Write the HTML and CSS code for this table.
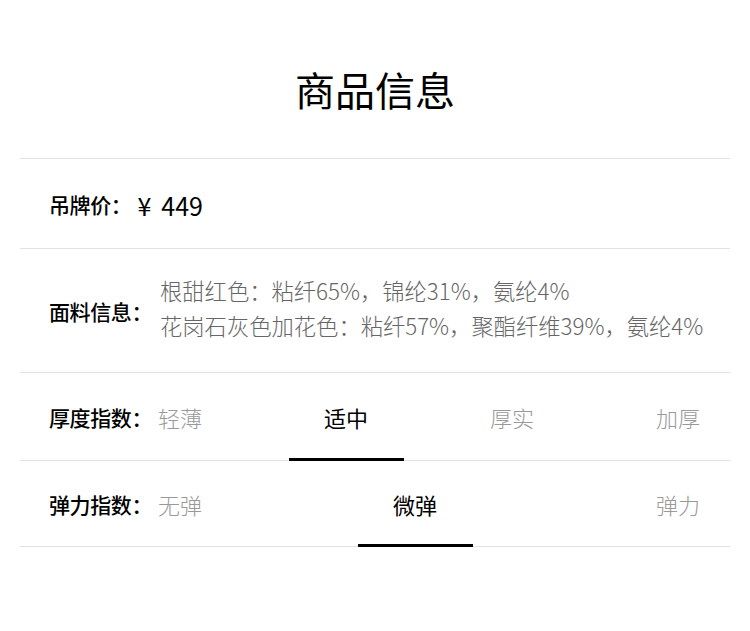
FILE: index.html
```html
<!DOCTYPE html>
<html lang="zh-CN">
<head>
  <meta charset="UTF-8" />
  <meta name="viewport" content="width=device-width, initial-scale=1.0"/>
  <title>商品信息</title>
  <link rel="stylesheet" href="styles.css">
</head>
<body>
  <div class="page">
    <h1 class="title">商品信息</h1>

    <div class="specs">
      <div class="row row-price">
        <span class="label">吊牌价：</span>
        <span class="price"><span class="currency">¥</span>449</span>
      </div>

      <div class="row row-fabric">
        <span class="label">面料信息：</span>
        <div class="fabric">
          <p>根甜红色：粘纤65%，锦纶31%，氨纶4%</p>
          <p>花岗石灰色加花色：粘纤57%，聚酯纤维39%，氨纶4%</p>
        </div>
      </div>

      <div class="row row-thick">
        <span class="label">厚度指数：</span>
        <ul class="options">
          <li>轻薄</li>
          <li class="active">适中</li>
          <li>厚实</li>
          <li>加厚</li>
        </ul>
      </div>

      <div class="row row-stretch">
        <span class="label">弹力指数：</span>
        <ul class="options">
          <li>无弹</li>
          <li class="active mid">微弹</li>
          <li>弹力</li>
        </ul>
      </div>
    </div>
  </div>
</body>
</html>
```

FILE: styles.css
```css
body {
  margin: 0;
  background: #fff;
  color: #000;
  font-family: "Noto Sans CJK SC", "Noto Sans", sans-serif;
}

.page {
  padding: 0 20px;
}

.title {
  margin: 0;
  padding: 67px 0 47px;
  font-size: 40px;
  line-height: 44px;
  font-weight: 400;
  text-align: center;
}

.specs {
  border-top: 1px solid #e2e2e2;
}

.row {
  display: flex;
  align-items: center;
  padding: 0 30px 0 29px;
  border-bottom: 1px solid #e2e2e2;
  white-space: nowrap;
}

.row-price {
  height: 89px;
}

.row-fabric {
  height: 123px;
}

.row-thick {
  height: 87px;
}

.row-stretch {
  height: 85px;
}

.label {
  flex-shrink: 0;
  margin-right: 6px;
  font-size: 21px;
  font-weight: 500;
  line-height: 30px;
  letter-spacing: -0.4px;
}

.price {
  font-size: 25px;
  line-height: 30px;
  margin-top: 2px;
}

.currency {
  margin-right: 10px;
}

.fabric {
  margin: 0 0 6px 2px;
  color: #666;
  font-size: 22.3px;
  font-weight: 300;
  line-height: 35px;
}

.fabric p {
  margin: 0;
}

.options {
  flex: 1;
  align-self: stretch;
  display: flex;
  justify-content: space-between;
  margin: 0;
  padding: 0;
  list-style: none;
}

.options li {
  position: relative;
  display: flex;
  align-items: center;
  color: #999;
  font-size: 22px;
  font-weight: 300;
}

.options .active {
  color: #000;
  font-weight: 400;
}

.options .active::after {
  content: "";
  position: absolute;
  left: 50%;
  bottom: -1px;
  width: 115px;
  height: 3px;
  margin-left: -57px;
  background: #000;
}

.options .mid {
  margin-right: 28px;
}
```
